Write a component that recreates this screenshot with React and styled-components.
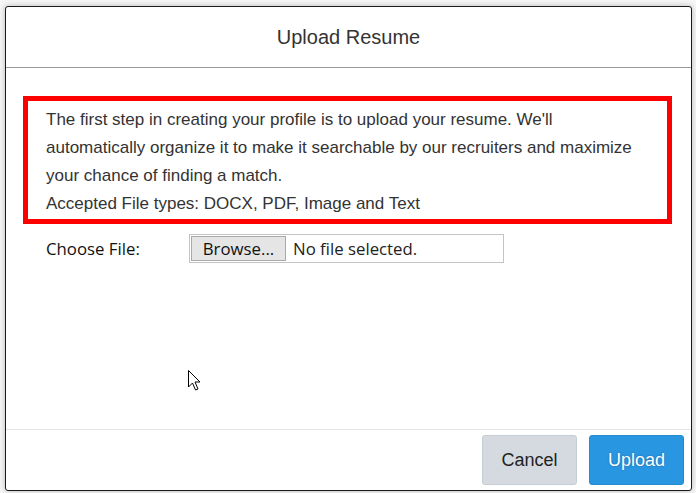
import React from "react";
import styled, { createGlobalStyle } from "styled-components";

const GlobalStyle = createGlobalStyle`
  html, body {
    margin: 0;
    padding: 0;
    background: #f7f7f7;
  }
  body {
    font-family: "Liberation Sans", Arial, sans-serif;
  }
`;

const Page = styled.div`
  position: relative;
  width: 696px;
  height: 493px;
  padding: 6px 4px 2px 5px;
  box-sizing: border-box;
  overflow: hidden;
`;

const Modal = styled.div`
  width: 687px;
  height: 485px;
  box-sizing: border-box;
  background: #fff;
  border: 1px solid #1a1a1a;
  border-radius: 3px;
  box-shadow: 0 0 6px rgba(0, 0, 0, 0.25);
  display: flex;
  flex-direction: column;
`;

const Header = styled.div`
  height: 60px;
  display: flex;
  align-items: center;
  justify-content: center;
  border-bottom: 1px solid #9a9a9a;
`;

const Title = styled.h4`
  margin: 0;
  font-size: 20px;
  font-weight: normal;
  color: #333;
`;

const Body = styled.div`
  flex: 1;
  padding: 28px 19px 0 17px;
`;

const Notice = styled.div`
  border: 5px solid #ff0000;
  padding: 5px 15px 1px 18px;
  font-size: 17px;
  line-height: 28px;
  color: #333;
`;

const FileRow = styled.div`
  display: flex;
  align-items: center;
  margin-top: 10px;
  padding-left: 23px;
`;

const Label = styled.label`
  width: 143px;
  font-family: "Open Sans", "Liberation Sans", sans-serif;
  font-size: 16.8px;
  color: #111;
`;

const FileBox = styled.div`
  width: 315px;
  height: 29px;
  box-sizing: border-box;
  border: 1px solid #c4c4c4;
  padding: 1px;
  display: flex;
  align-items: center;
  gap: 7px;
  font-family: "Open Sans", "Liberation Sans", sans-serif;
  font-size: 16.8px;
`;

const BrowseButton = styled.button`
  height: 25px;
  width: 95px;
  padding: 0;
  border: 1px solid #a9a9a9;
  background: #e5e5e5;
  font-family: inherit;
  font-size: inherit;
  color: #111;
`;

const FileName = styled.span`
  color: #222;
`;

const Footer = styled.div`
  border-top: 1px solid #e5e5e5;
  padding: 5px 7px 5px 0;
  display: flex;
  justify-content: flex-end;
  gap: 12px;
`;

const Button = styled.button`
  width: 95px;
  height: 50px;
  border-radius: 3px;
  font-family: "Liberation Sans", Arial, sans-serif;
  font-size: 18px;
  border: 1px solid ${(p) => (p.$primary ? "#2589d0" : "#c6cdd3")};
  background: ${(p) => (p.$primary ? "#2996e2" : "#d4dadf")};
  color: ${(p) => (p.$primary ? "#fff" : "#222")};
  text-shadow: ${(p) => (p.$primary ? "0 0 2px rgba(0,0,0,0.35)" : "none")};
`;

const Cursor = styled.svg`
  position: absolute;
  left: 188px;
  top: 370px;
`;

export default function App() {
  return (
    <Page>
      <GlobalStyle />
      <Modal>
        <Header>
          <Title>Upload Resume</Title>
        </Header>
        <Body>
          <Notice>
            The first step in creating your profile is to upload your resume. We'll
            automatically organize it to make it searchable by our recruiters and maximize
            your chance of finding a match.
            <br />
            Accepted File types: DOCX, PDF, Image and Text
          </Notice>
          <FileRow>
            <Label>Choose File:</Label>
            <FileBox>
              <BrowseButton>Browse...</BrowseButton>
              <FileName>No file selected.</FileName>
            </FileBox>
          </FileRow>
        </Body>
        <Footer>
          <Button>Cancel</Button>
          <Button $primary>Upload</Button>
        </Footer>
      </Modal>
      <Cursor width="13" height="22" viewBox="0 0 13 22">
        <path
          d="M0.5 0.5 L0.5 17 L4.5 13 L7.5 20 L10 19 L7 12 L12 12 Z"
          fill="#fff"
          stroke="#000"
          strokeWidth="1"
        />
      </Cursor>
    </Page>
  );
}
